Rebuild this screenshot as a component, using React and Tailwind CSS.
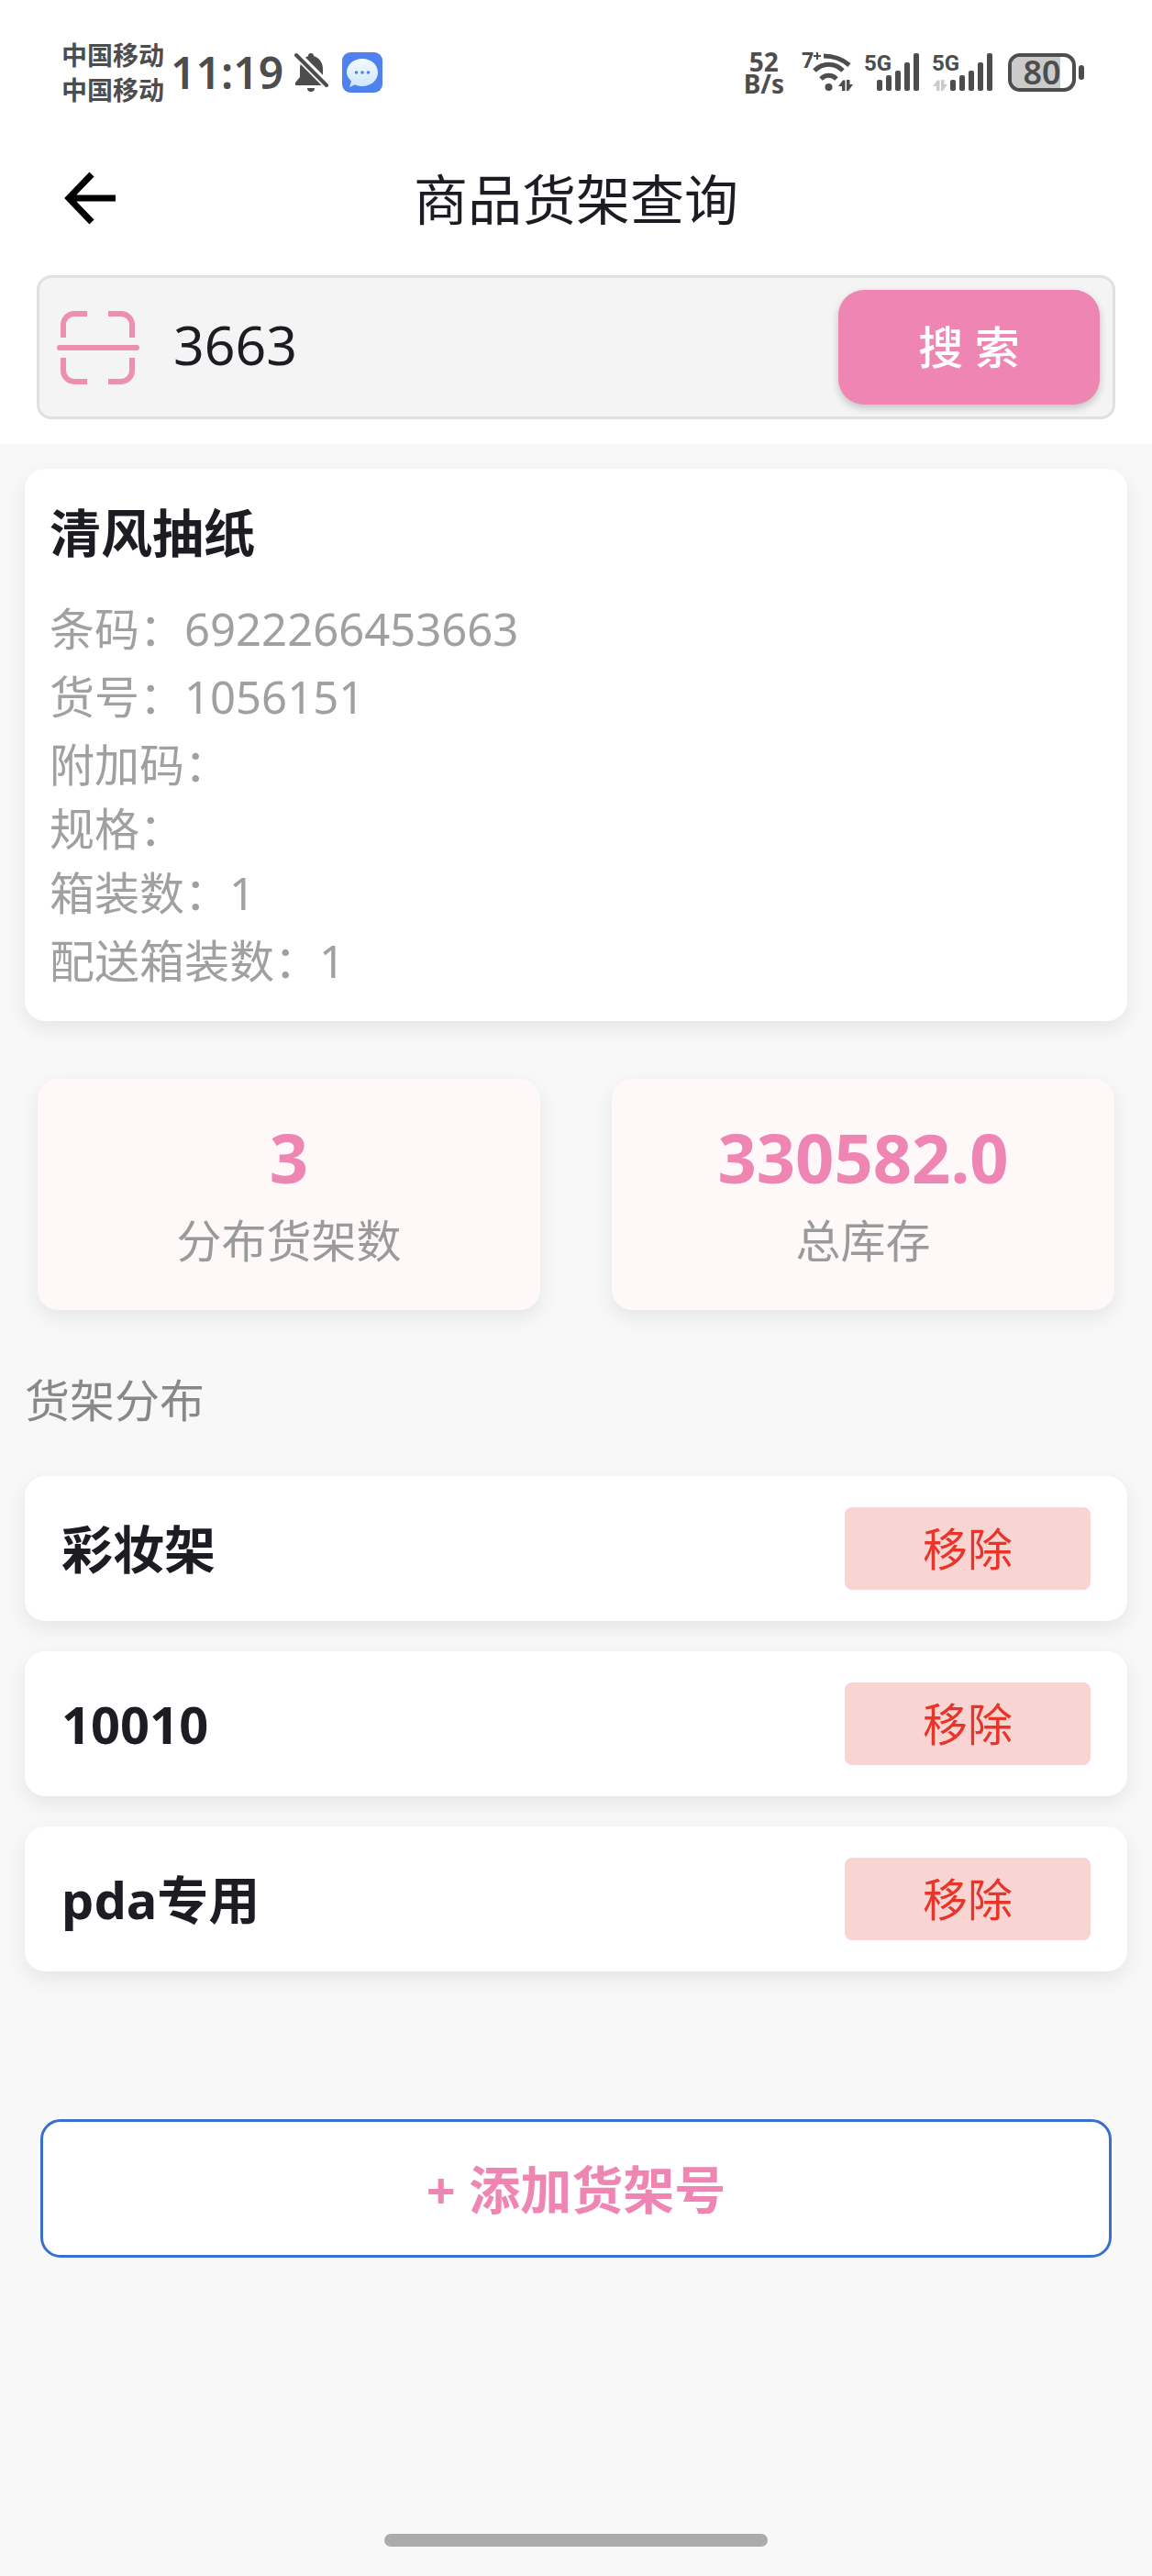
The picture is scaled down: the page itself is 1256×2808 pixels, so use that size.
import { useState } from 'react'

const product = {
  name: '清风抽纸',
  fields: [
    { label: '条码', value: '6922266453663' },
    { label: '货号', value: '1056151' },
    { label: '附加码', value: '' },
    { label: '规格', value: '' },
    { label: '箱装数', value: '1' },
    { label: '配送箱装数', value: '1' },
  ],
}

const stats = [
  { label: '分布货架数', value: '3' },
  { label: '总库存', value: '330582.0' },
]

const initialShelves = ['彩妆架', '10010', 'pda专用']

function BellOffIcon() {
  return (
    <svg viewBox="0 0 38 44" className="w-[38px] h-11" aria-hidden="true">
      <path
        fill="#4d4d4d"
        d="M18 1a3 3 0 0 1 3 3c6 2 10 7 10 14v8l4 6 1 4H1v-3l5-6v-9c0-7 4-12 9-14a3 3 0 0 1 3-3z"
      />
      <path fill="#4d4d4d" d="M14 39h8a4 4 0 0 1-8 0z" />
      <path stroke="#fff" strokeWidth="9" d="M0 0 38 38" />
      <path stroke="#4d4d4d" strokeWidth="4" strokeLinecap="round" d="M2 3 35 36" />
    </svg>
  )
}

function MessageAppIcon() {
  return (
    <svg viewBox="0 0 44 44" className="w-11 h-11" aria-hidden="true">
      <defs>
        <linearGradient id="bubble" x1="0" y1="0" x2="0" y2="1">
          <stop offset="0" stopColor="#f2fbff" />
          <stop offset="1" stopColor="#cfe6fd" />
        </linearGradient>
      </defs>
      <rect width="44" height="44" rx="9" fill="#4f82ee" />
      <path
        fill="url(#bubble)"
        d="M22 7c9.500 0 17 6.500 17 15s-7.500 15-17 15c-3 0-5.500-.6-8-1.800L8 38l2-6.500C7 28.800 5 25.500 5 22 5 13.500 12.500 7 22 7z"
      />
      <circle cx="15.500" cy="22" r="1.800" fill="#4f82ee" />
      <circle cx="22" cy="22" r="1.800" fill="#4f82ee" />
      <circle cx="28.500" cy="22" r="1.800" fill="#4f82ee" />
    </svg>
  )
}

function TrafficArrows({ x, y, color }) {
  return (
    <g transform={`translate(${x} ${y})`} fill={color}>
      <path d="M0 7 5 0.500h2.500V12H4V7z" />
      <path d="M9 0h3.500v5H16l-5 7H9z" />
    </g>
  )
}

function WifiIcon() {
  return (
    <svg viewBox="0 0 58 46" className="w-[58px] h-[46px] overflow-visible" aria-hidden="true">
      <text x="0" y="18" fill="#4d4d4d" fontSize="23" fontWeight="700">7</text>
      <path stroke="#4d4d4d" strokeWidth="2" d="M13 5h8M17 1v8" />
      <g fill="none" stroke="#4d4d4d" strokeWidth="5">
        <path d="M24 5c11 0 21 4 28 10" />
        <path d="M14 21c9-9 22-9 31 0" />
        <path d="M21 30c5-5 12-5 17 0" />
      </g>
      <circle cx="29.500" cy="39" r="4" fill="#4d4d4d" />
      <TrafficArrows x={40} y={31} color="#4d4d4d" />
    </svg>
  )
}

const signalBars = [
  { x: 0, y: 30 },
  { x: 10, y: 25 },
  { x: 20, y: 20 },
  { x: 30, y: 11 },
  { x: 40, y: 1 },
]

function SignalIcon({ idle }) {
  const offset = idle ? 20 : 14
  return (
    <svg viewBox="0 0 67 44" className="w-[67px] h-11 overflow-visible" aria-hidden="true">
      <text x="0" y="20" fill="#4d4d4d" fontSize="24" fontWeight="700" fontFamily="Liberation Sans Narrow, Roboto, sans-serif">5G</text>
      {idle && <TrafficArrows x={1} y={30} color="#cbcbcb" />}
      {signalBars.map(({ x, y }) => (
        <rect key={x} x={x + offset} y={y} width="6" height={42 - y} rx="2" fill="#4d4d4d" />
      ))}
    </svg>
  )
}

function BatteryIcon() {
  return (
    <div className="flex items-center gap-[3px]">
      <div className="relative flex items-center justify-center w-[74px] h-[42px] rounded-[13px] border-4 border-[#4d4d4d] overflow-hidden">
        <div className="absolute inset-y-0 left-0 w-4/5 bg-[#cbcbcb]" />
        <span className="relative text-[36px] leading-[36px] font-semibold">80</span>
      </div>
      <div className="w-[6px] h-4 rounded-[3px] bg-[#4d4d4d]" />
    </div>
  )
}

function StatusBar() {
  return (
    <div className="flex items-center justify-between h-[158px] pl-[67px] pr-[74px] text-[#4d4d4d]">
      <div className="flex items-center">
        <div className="text-[28px] leading-[38px] font-semibold">
          <div>中国移动</div>
          <div>中国移动</div>
        </div>
        <span className="ml-[7px] text-[48px] leading-[48px] font-semibold">11:19</span>
        <div className="flex items-center gap-[14px] ml-3">
          <BellOffIcon />
          <MessageAppIcon />
        </div>
      </div>
      <div className="flex items-center">
        <div className="mr-[19px] text-[28px] leading-[24px] font-bold text-center">
          <div>52</div>
          <div>B/s</div>
        </div>
        <WifiIcon />
        <div className="flex gap-[7px] ml-[10px] mr-4">
          <SignalIcon />
          <SignalIcon idle />
        </div>
        <BatteryIcon />
      </div>
    </div>
  )
}

function ScanIcon() {
  return (
    <svg viewBox="0 0 92 82" className="w-[92px] h-[82px]" fill="none" stroke="#ec8fb1" strokeWidth="6" aria-hidden="true">
      <path d="M8 30V16a12 12 0 0 1 12-12h14M57 4h14a12 12 0 0 1 12 12v14M83 52v14a12 12 0 0 1-12 12H57M34 78H20a12 12 0 0 1-12-12V52" />
      <path strokeLinecap="round" d="M4 41h84" />
    </svg>
  )
}

function SearchBar() {
  const [keyword, setKeyword] = useState('3663')

  return (
    <form
      onSubmit={(e) => e.preventDefault()}
      className="flex items-center mx-10 mt-6 py-[13px] pl-[18px] pr-[14px] rounded-2xl border-[3px] border-[#e0e0e0] bg-[#f4f4f4]"
    >
      <button type="button" aria-label="扫码" className="shrink-0">
        <ScanIcon />
      </button>
      <input
        type="text"
        aria-label="商品编码"
        value={keyword}
        onChange={(e) => setKeyword(e.target.value)}
        className="flex-1 min-w-0 ml-9 pb-2 bg-transparent text-[59px] leading-[80px] text-[#1c1d22] outline-none"
      />
      <button
        type="submit"
        className="shrink-0 w-[285px] h-[125px] rounded-[28px] bg-[#ee85b2] text-[49px] font-medium text-white shadow-[0_4px_8px_rgba(0,0,0,0.2)]"
      >
        搜 索
      </button>
    </form>
  )
}

function ProductCard({ name, fields }) {
  return (
    <section className="mx-[27px] mt-[27px] p-[27px] rounded-[22px] bg-white shadow-[0_8px_22px_rgba(0,0,0,0.08)]">
      <h2 className="text-[56px] leading-[84px] font-bold text-[#1c1d22]">{name}</h2>
      <dl className="mt-7 text-[49px] leading-[70px] text-[#a0a0a0]">
        {fields.map(({ label, value }) => (
          <div key={label} className={`flex ${value ? 'h-[74px]' : 'h-[70px]'}`}>
            <dt>{label}：</dt>
            <dd>{value}</dd>
          </div>
        ))}
      </dl>
    </section>
  )
}

function StatCard({ label, value }) {
  return (
    <div className="py-9 rounded-[22px] bg-[#fef8f8] text-center shadow-[0_8px_22px_rgba(0,0,0,0.08)]">
      <div className="text-[74px] leading-[100px] font-bold text-[#ee85b2]">{value}</div>
      <div className="text-[49px] leading-[80px] text-[#9a9a9a]">{label}</div>
    </div>
  )
}

function ShelfItem({ name, onRemove }) {
  return (
    <li className="flex items-center justify-between py-[34px] px-10 rounded-[22px] bg-white shadow-[0_8px_22px_rgba(0,0,0,0.08)]">
      <span className="text-[56px] leading-[84px] font-bold text-[#1c1d22]">{name}</span>
      <button
        type="button"
        onClick={onRemove}
        className="w-[268px] h-[90px] rounded-lg bg-[#f8d4d3] text-[49px] leading-[70px] text-[#e8352a]"
      >
        移除
      </button>
    </li>
  )
}

export default function App() {
  const [shelves, setShelves] = useState(initialShelves)

  return (
    <div
      lang="zh-CN"
      className="flex flex-col min-h-screen bg-[#f8f8f8] font-['Noto_Sans','Noto_Sans_CJK_SC',sans-serif]"
    >
      <header className="pb-[27px] bg-white">
        <StatusBar />
        <div className="grid grid-cols-[1fr_auto_1fr] items-center h-[118px] px-[68px]">
          <button type="button" aria-label="返回" className="justify-self-start">
            <svg viewBox="0 0 60 60" className="w-[60px] h-[60px]" fill="none" stroke="#000" strokeWidth="7" aria-hidden="true">
              <path d="M58 29H8M32 3 7 29l25 26" />
            </svg>
          </button>
          <h1 className="text-[59px] leading-[80px] text-[#1c1d22]">商品货架查询</h1>
        </div>
        <SearchBar />
      </header>

      <main>
        <ProductCard {...product} />

        <div className="grid grid-cols-2 gap-[78px] mx-[41px] mt-[63px]">
          {stats.map((stat) => (
            <StatCard key={stat.label} {...stat} />
          ))}
        </div>

        <h2 className="mx-[27px] mt-[62px] text-[49px] leading-[72px] text-[#888888]">货架分布</h2>
        <ul className="flex flex-col gap-[33px] mx-[27px] mt-[47px]">
          {shelves.map((name) => (
            <ShelfItem
              key={name}
              name={name}
              onRemove={() => setShelves(shelves.filter((s) => s !== name))}
            />
          ))}
        </ul>

        <div className="mx-11 mt-[161px]">
          <button
            type="button"
            className="w-full h-[151px] rounded-[22px] border-[3px] border-[#3a6fd0] bg-white text-[56px] font-bold text-[#ee85b2]"
          >
            + 添加货架号
          </button>
        </div>
      </main>

      <div className="mt-auto mx-auto mb-8 w-1/3 h-[14px] rounded-full bg-[#ababab]" />
    </div>
  )
}
